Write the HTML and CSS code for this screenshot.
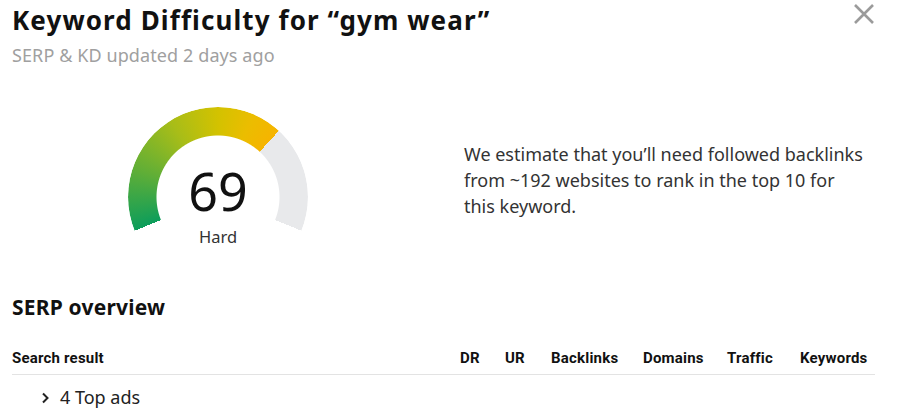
FILE: index.html
```html
<!DOCTYPE html>
<html>
<head>
<meta charset="utf-8">
<link rel="stylesheet" href="styles.css">
</head>
<body>
<div class="panel">
  <header class="head">
    <div>
      <h1 class="title">Keyword Difficulty for “gym wear”</h1>
      <div class="sub">SERP &amp; KD updated 2 days ago</div>
    </div>
    <button class="close" aria-label="Close">
      <svg width="24" height="24" viewBox="0 0 24 24"><path d="M3 3L21 21M21 3L3 21" stroke="#9b9b9b" stroke-width="2.6" fill="none"/></svg>
    </button>
  </header>
  <section class="kd">
    <div class="gauge-col">
      <div class="gauge">
        <div class="ring"></div>
        <div class="score">
          <div class="num">69</div>
          <div class="label">Hard</div>
        </div>
      </div>
    </div>
    <p class="estimate">We estimate that you’ll need followed backlinks from ~192 websites to rank in the top 10 for this keyword.</p>
  </section>
  <h2 class="serp">SERP overview</h2>
  <div class="thead">
    <span class="c-res">Search result</span>
    <span class="c-dr">DR</span>
    <span class="c-ur">UR</span>
    <span class="c-bl">Backlinks</span>
    <span class="c-dom">Domains</span>
    <span class="c-tr">Traffic</span>
    <span class="c-kw">Keywords</span>
  </div>
  <div class="row">
    <svg class="chev" width="10" height="12" viewBox="0 0 10 12"><path d="M3 1.5L7.5 6L3 10.5" stroke="#222" stroke-width="2" fill="none"/></svg>
    <span>4 Top ads</span>
  </div>
</div>
</body>
</html>
```
FILE: styles.css
```css
html, body { margin: 0; padding: 0; background: #fff; }
body { font-family: "Noto Sans", "Open Sans", sans-serif; color: #111; }
.panel { width: 864px; padding: 0 0 0 12px; }
.head { display: flex; justify-content: space-between; align-items: flex-start; }
.title { margin: 0; padding-top: 2px; font-size: 26px; line-height: 36px; font-weight: 700; letter-spacing: 1.1px; color: #111; }
.sub { margin-top: 6px; font-size: 18px; line-height: 22px; color: #a0a0a0; letter-spacing: 0.1px; }
.close { border: 0; background: none; padding: 0; margin: 2px -2px 0 0; width: 28px; height: 24px; display: flex; align-items: center; justify-content: center; }
.kd { display: flex; align-items: center; margin-top: 41px; height: 144px; }
.gauge-col { width: 452px; flex: none; display: flex; padding-left: 116px; box-sizing: border-box; }
.gauge { display: grid; width: 180px; height: 144px; }
.ring, .score { grid-area: 1 / 1; }
.ring {
  width: 180px; height: 180px; border-radius: 50%;
  background: conic-gradient(from 248deg,
    #0c9d5b 0deg, #5fae37 40deg, #a8bd18 80deg, #d3c200 112deg, #ebbd00 135deg, #f6b400 154.6deg,
    #e8e9eb 154.6deg, #e8e9eb 224deg, transparent 224deg);
  -webkit-mask: radial-gradient(circle, transparent 61px, #000 62px);
  mask: radial-gradient(circle, transparent 61px, #000 62px);
}
.score { display: flex; flex-direction: column; align-items: center; padding-top: 56px; }
.num { font-size: 52px; line-height: 56px; color: #111; font-weight: 400; }
.label { font-size: 16.5px; line-height: 20px; color: #333; margin-top: 8px; }
.estimate { margin: 0; width: 402px; font-size: 18px; line-height: 26px; color: #333; padding-top: 2px; }
.serp { margin: 43px 0 0 0; font-size: 21px; line-height: 26px; font-weight: 700; color: #111; letter-spacing: 0.2px; }
.thead { display: flex; align-items: center; margin-top: 22px; height: 32px; border-bottom: 1px solid #e3e3e3; width: 863px; font-family: Roboto, sans-serif; font-weight: 700; font-size: 15px; letter-spacing: 0.2px; color: #111; }
.thead span { white-space: nowrap; }
.c-res { flex: 1; }
.c-dr { width: 45px; }
.c-ur { width: 46px; }
.c-bl { width: 92px; }
.c-dom { width: 84px; }
.c-tr { width: 73px; }
.c-kw { width: 75px; }
.row { display: flex; align-items: center; gap: 10px; padding-left: 28px; height: 44px; font-size: 18px; color: #222; }
.chev { margin-top: 1px; }
```
